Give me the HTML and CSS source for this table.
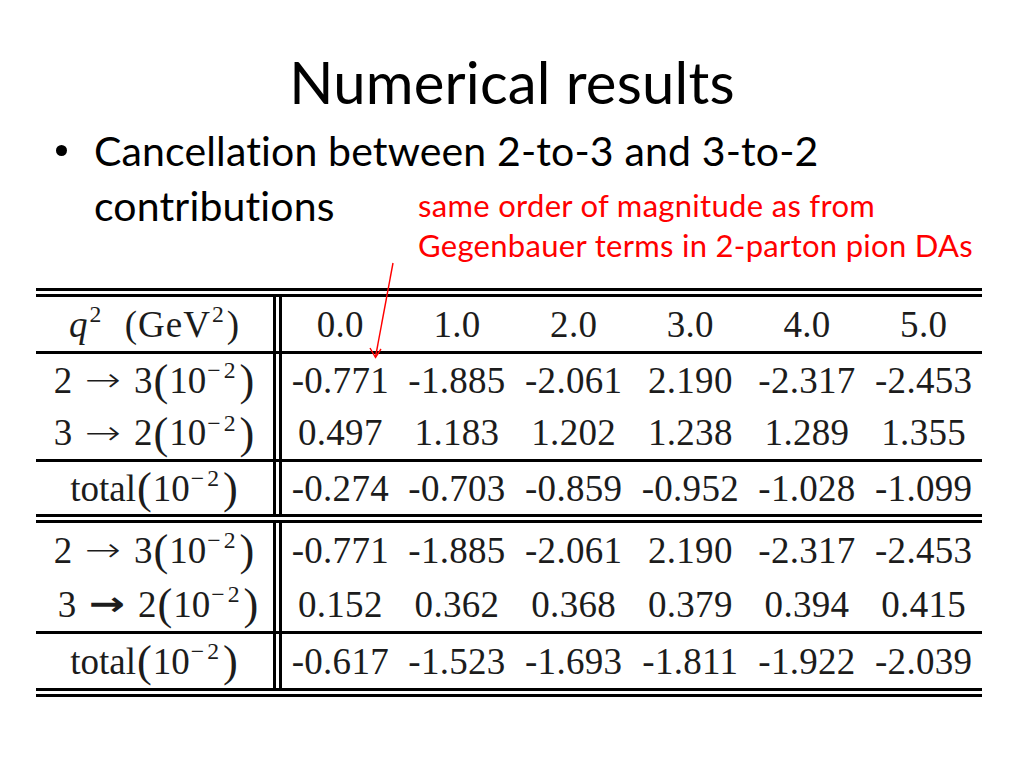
FILE: index.html
```html
<!DOCTYPE html>
<html lang="en">
<head>
<meta charset="utf-8">
<title>Numerical results</title>
<link rel="stylesheet" href="styles.css">
</head>
<body>
<div class="slide">
  <h1 class="title">Numerical results</h1>
  <ul class="bullets">
    <li><span class="dot"></span><span class="btext">Cancellation between 2-to-3 and 3-to-2<br>contributions</span></li>
  </ul>
  <div class="note">same order of magnitude as from<br>Gegenbauer terms in 2-parton pion DAs</div>
  <svg class="arrow" width="1024" height="768" viewBox="0 0 1024 768">
    <path d="M393 263 L375.5 357" stroke="#f00" stroke-width="1.4" fill="none"/>
    <path d="M370 348 L375.5 357.5 L381 349" stroke="#f00" stroke-width="1.4" fill="none"/>
  </svg>

  <div class="table">
    <div class="row head">
      <div class="label hl"><i>q</i><sup>2</sup>&nbsp; (GeV<sup>2</sup>)</div>
      <div class="cell">0.0</div><div class="cell">1.0</div><div class="cell">2.0</div><div class="cell">3.0</div><div class="cell">4.0</div><div class="cell">5.0</div>
    </div>
    <div class="row r52">
      <div class="label">2<span class="arr">→</span>3<span class="p">(</span>10<sup>−2</sup><span class="p">)</span></div>
      <div class="cell">-0.771</div><div class="cell">-1.885</div><div class="cell">-2.061</div><div class="cell">2.190</div><div class="cell">-2.317</div><div class="cell">-2.453</div>
    </div>
    <div class="row r53">
      <div class="label">3<span class="arr">→</span>2<span class="p">(</span>10<sup>−2</sup><span class="p">)</span></div>
      <div class="cell">0.497</div><div class="cell">1.183</div><div class="cell">1.202</div><div class="cell">1.238</div><div class="cell">1.289</div><div class="cell">1.355</div>
    </div>
    <div class="row total r52">
      <div class="label">total<span class="p">(</span>10<sup>−2</sup><span class="p">)</span></div>
      <div class="cell">-0.274</div><div class="cell">-0.703</div><div class="cell">-0.859</div><div class="cell">-0.952</div><div class="cell">-1.028</div><div class="cell">-1.099</div>
    </div>
    <div class="row sec r54">
      <div class="label">2<span class="arr">→</span>3<span class="p">(</span>10<sup>−2</sup><span class="p">)</span></div>
      <div class="cell">-0.771</div><div class="cell">-1.885</div><div class="cell">-2.061</div><div class="cell">2.190</div><div class="cell">-2.317</div><div class="cell">-2.453</div>
    </div>
    <div class="row r54">
      <div class="label shift">3<span class="arr bold">→</span>2<span class="p">(</span>10<sup>−2</sup><span class="p">)</span></div>
      <div class="cell">0.152</div><div class="cell">0.362</div><div class="cell">0.368</div><div class="cell">0.379</div><div class="cell">0.394</div><div class="cell">0.415</div>
    </div>
    <div class="row total r54">
      <div class="label">total<span class="p">(</span>10<sup>−2</sup><span class="p">)</span></div>
      <div class="cell">-0.617</div><div class="cell">-1.523</div><div class="cell">-1.693</div><div class="cell">-1.811</div><div class="cell">-1.922</div><div class="cell">-2.039</div>
    </div>
  </div>
</div>
</body>
</html>
```

FILE: styles.css
```css
html, body {
  margin: 0;
  padding: 0;
  background: #fff;
}

.slide {
  position: relative;
  width: 1024px;
  height: 768px;
  overflow: hidden;
  background: #fff;
  font-family: "Lato", "Open Sans", sans-serif;
  color: #000;
}

.title {
  margin: 0;
  padding-top: 53px;
  font-size: 58px;
  line-height: 58px;
  font-weight: 400;
  text-align: center;
  letter-spacing: 0.2px;
}

.bullets {
  list-style: none;
  margin: 12px 0 0 0;
  padding: 0;
}

.bullets li {
  display: flex;
  align-items: flex-start;
  font-size: 41px;
  line-height: 55px;
}

.dot {
  flex: none;
  width: 11px;
  height: 11px;
  border-radius: 50%;
  background: #000;
  margin: 22px 27px 0 56px;
}

.btext {
  letter-spacing: 0.15px;
}

.note {
  position: absolute;
  left: 418px;
  top: 185px;
  font-size: 31px;
  line-height: 40px;
  color: #f00;
  letter-spacing: 0.3px;
  white-space: nowrap;
}

.arrow {
  position: absolute;
  left: 0;
  top: 0;
  pointer-events: none;
}

.table {
  margin: 55px 0 0 36px;
  width: 946px;
  border-top: 9px double #000;
  border-bottom: 9px double #000;
  font-family: "Liberation Serif", "DejaVu Serif", serif;
  font-size: 37px;
  color: #1c1c1c;
}

.row {
  display: grid;
  grid-template-columns: 246px repeat(6, 1fr);
}

.row > div {
  display: flex;
  align-items: center;
  justify-content: center;
  white-space: nowrap;
}

.label {
  box-sizing: border-box;
  border-right: 9px double #000;
}

.hl {
  letter-spacing: 1px;
}

.head {
  height: 54px;
  border-bottom: 3px solid #000;
}

.r52 { height: 52px; }
.r53 { height: 53px; }
.r54 { height: 54px; }

.total {
  border-top: 3px solid #000;
}

.sec {
  border-top: 9px double #000;
}

.row sup {
  font-size: 0.64em;
  position: relative;
  top: -0.42em;
  vertical-align: baseline;
  line-height: 0;
  margin-left: 1px;
  letter-spacing: 3px;
}

.p {
  font-size: 1.2em;
  line-height: 0;
  font-weight: 300;
  margin: 0 1px;
}

.arr {
  display: inline-block;
  font-family: "DejaVu Sans", sans-serif;
  font-weight: 200;
  font-size: 0.9em;
  line-height: 0;
  margin: 0 17px 0 17px;
  transform: scaleX(1.3);
}

.arr.bold {
  font-weight: 700;
}

.shift {
  padding-left: 8px;
}

.cell {
  letter-spacing: 0.3px;
}
```
